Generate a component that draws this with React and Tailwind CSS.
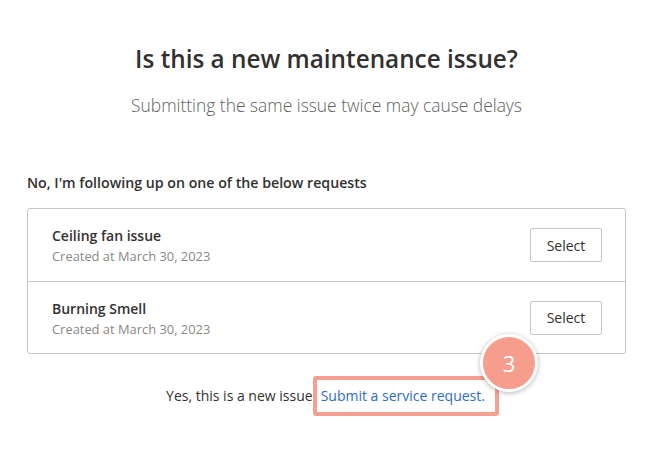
const requests = [
  { id: 1, title: 'Ceiling fan issue', created: 'March 30, 2023' },
  { id: 2, title: 'Burning Smell', created: 'March 30, 2023' },
]

export default function App() {
  return (
    <div className="w-[666px] h-[464px] bg-white overflow-hidden" style={{ fontFamily: '"Open Sans", "Noto Sans", sans-serif' }}>
      <div className="ml-[27px] w-[599px] pt-[43px]">
        <h1 className="text-center text-[24.3px] leading-[32px] font-semibold text-[#323130]">
          Is this a new maintenance issue?
        </h1>
        <p className="mt-[18px] text-center text-[17.4px] leading-[24px] font-light text-[#605e5c]">
          Submitting the same issue twice may cause delays
        </p>

        <p className="mt-[56px] text-[14.2px] leading-[20px] font-semibold text-[#323130]">
          No, I'm following up on one of the below requests
        </p>

        <div className="mt-[15px] border border-[#c8c6c4] rounded-[3px]">
          {requests.map((r, i) => (
            <div
              key={r.id}
              className={`h-[72px] flex items-center justify-between pl-[24px] pr-[23px] ${i > 0 ? 'border-t border-[#c8c6c4]' : ''}`}
            >
              <div className="pt-[2px]">
                <p className="text-[14px] leading-[20px] font-semibold text-[#323130]">{r.title}</p>
                <p className="text-[12.9px] leading-[20px] text-[#8a8886]">Created at {r.created}</p>
              </div>
              <button className="w-[72px] h-[34px] border border-[#c8c6c4] rounded-[2px] text-[14px] text-[#323130] bg-white">
                Select
              </button>
            </div>
          ))}
        </div>

        <div className="mt-[32px] flex items-center justify-center text-[14px] leading-[20px] text-[#323130] pl-[12px]">
          <span>Yes, this is a new issue</span>
          <span className="relative">
            <span className="block border-4 border-[#f7a091] rounded-[3px] pl-[4px] pr-[10px] py-[6px] text-[#2f6cc9] -my-[10px]">
              Submit a service request.
            </span>
            <span className="absolute -top-[52px] -right-[39px] w-[58px] h-[58px] rounded-full bg-[#f79d8d] border-[3px] border-white shadow-[0_1px_5px_rgba(0,0,0,0.3)] flex items-center justify-center text-white text-[22px]">
              3
            </span>
          </span>
        </div>
      </div>
    </div>
  )
}
